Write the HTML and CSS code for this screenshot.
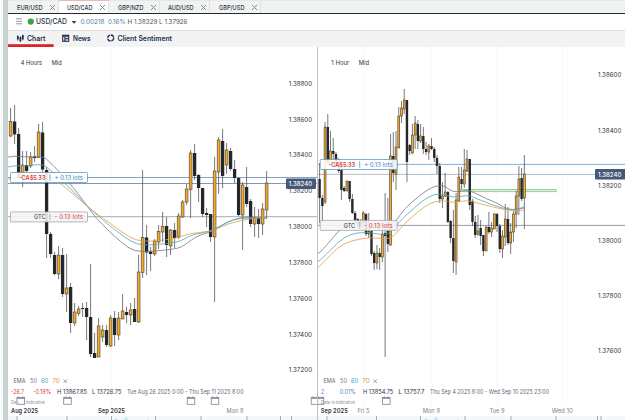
FILE: index.html
```html
<!DOCTYPE html>
<html lang="en">
<head>
<meta charset="utf-8">
<title>USD/CAD</title>
<link rel="stylesheet" href="styles.css">
</head>
<body>
<div class="app">
  <div class="rail"></div>
  <main class="workspace">
    <div class="tabs">
      <div class="tab"><svg viewBox="0 0 25.5 7"><text y="6" textLength="25.5" lengthAdjust="spacingAndGlyphs">EUR/USD</text></svg><i class="close"></i></div>
      <div class="tab active"><svg viewBox="0 0 25.5 7"><text y="6" textLength="25.5" lengthAdjust="spacingAndGlyphs">USD/CAD</text></svg><i class="close"></i></div>
      <div class="tab"><svg viewBox="0 0 25.5 7"><text y="6" textLength="25.5" lengthAdjust="spacingAndGlyphs">GBP/NZD</text></svg><i class="close"></i></div>
      <div class="tab"><svg viewBox="0 0 25.5 7"><text y="6" textLength="25.5" lengthAdjust="spacingAndGlyphs">AUD/USD</text></svg><i class="close"></i></div>
      <div class="tab"><svg viewBox="0 0 25.5 7"><text y="6" textLength="25.5" lengthAdjust="spacingAndGlyphs">GBP/USD</text></svg><i class="close"></i></div>
    </div>
    <div class="quote">
      <svg width="617" height="16" viewBox="8 14 617 16">
        <path d="M16 18.800h6M16 21.300h6M16 23.800h6" stroke="#777d86" stroke-width=".8"/>
        <circle cx="30.8" cy="21.6" r="3.1" fill="#35a447"/>
        <text class="pair" x="36" y="24.4" textLength="31" lengthAdjust="spacingAndGlyphs">USD/CAD</text>
        <path d="M71.5 21h5l-2.5 2.700z" fill="#333b48"/>
        <text class="up" x="80.5" y="24.3" textLength="24" lengthAdjust="spacingAndGlyphs">0.00218</text>
        <text class="up" x="108" y="24.3" textLength="17.5" lengthAdjust="spacingAndGlyphs">0.16%</text>
        <text class="range" x="127.5" y="24.3" textLength="60" lengthAdjust="spacingAndGlyphs">H 1.38329 L 1.37926</text>
      </svg>
    </div>
    <nav class="nav">
      <svg width="617" height="16" viewBox="8 31 617 16">
        <g stroke="#1b2e4d" fill="none">
          <path d="M17.8 36v3.5M20.4 37v4.500M22.8 35v4.500" stroke-width="1.7"/>
          <path d="M17.8 35v6M20.4 36v6M22.8 34.500v6" stroke-width=".5"/>
          <rect x="62.7" y="35.3" width="6" height="6" stroke-width="1.1"/>
          <path d="M62.500 36h6.500M65 37v4M66 38.600h2.500" stroke-width="1.3"/>
          <circle cx="110.7" cy="38" r="3" stroke-width="1.3" stroke-dasharray="3.9 .8"/>
        </g>
        <text x="27" y="40.6" textLength="18.5" lengthAdjust="spacingAndGlyphs">Chart</text>
        <text x="73" y="40.6" textLength="17.5" lengthAdjust="spacingAndGlyphs">News</text>
        <text x="117.5" y="40.6" textLength="54.5" lengthAdjust="spacingAndGlyphs">Client Sentiment</text>
        <rect x="8" y="44.2" width="45.7" height="2.8" fill="#dc2328"/>
      </svg>
    </nav>
    <div class="charts">
      <svg id="left" class="chart left" viewBox="8 47 309 373"></svg>
      <svg id="right" class="chart" viewBox="318 47 307 373"></svg>
    </div>
  </main>
</div>
<script src="chart.js"></script>
</body>
</html>
```
FILE: styles.css
```css
* { box-sizing: border-box; }
body { margin: 0; background: #fff; font-family: Inter, "Liberation Sans", sans-serif; overflow: hidden; }
.app { display: flex; width: 625px; height: 420px; }
.rail { flex: none; width: 8px; border-left: 3px solid #fbfcfc; background: #c9d3d4; }
.workspace { flex: 1; display: flex; flex-direction: column; min-width: 0; }
.workspace svg { display: block; }
.tabs { height: 14px; flex: none; display: flex; background: #f1f3f3; border-bottom: 1px solid #26282b; border-top: 1px solid #e3e8e8; }
.tab { width: 50.5px; display: flex; align-items: center; justify-content: space-between; padding: 0 3px 0 8.5px; border-right: 1px solid #e0e3e4; }
.tab.active { background: #fff; border-top: 1px solid #efb4b4; margin-top: -1px; }
.tab svg { width: 25.5px; height: 7px; overflow: visible; }
.tab text { font-size: 6.6px; font-weight: 500; fill: #303641; }
.close { width: 5px; height: 5px; background: linear-gradient(45deg, transparent 44%, #858a91 44%, #858a91 56%, transparent 56%), linear-gradient(-45deg, transparent 44%, #858a91 44%, #858a91 56%, transparent 56%); }
.quote { height: 16px; flex: none; }
.quote text { font-size: 6.6px; }
.quote .pair { font-size: 7.2px; font-weight: 500; fill: #253044; }
.quote .up { fill: #4580a8; }
.quote .range { fill: #4c5158; }
.nav { height: 17px; flex: none; background: #f3f3f3; border-top: 1px solid #dedede; }
.nav text { font-size: 7px; font-weight: 600; fill: #1b2e4d; }
.charts { flex: 1; display: flex; }
.chart { flex: none; width: 307px; height: 373px; }
.chart.left { width: 310px; border-right: 1px solid #c0c0c6; }
.chart text { font-size: 6.6px; fill: #303338; }
.chart .small { font-size: 6.2px; }
.chart .tiny { font-size: 4.8px; fill: #8c9096; }
.chart .month { font-weight: 600; fill: #34373c; }
.chart .day { fill: #7d8188; }
.chart .dates { fill: #626775; }
.chart .red { fill: #d63f3b; }
.chart .blue { fill: #3f89c0; }
.chart .gray { fill: #77798b; }
.chart .teal { fill: #43a8b6; }
.chart .amber { fill: #d39a34; }
.chart .bold { font-weight: 600; }
.chart .now { fill: #fff; font-weight: 500; }
```
FILE: chart.js
```javascript
// Candle rows: high, low, body top, body bottom, direction (1 = rising)
const fourHour = [
[108,137,121.5,136,1],[105,144,121.5,134.5,0],[128,180,134,178,0],[151,187,165,177,1],[151,172,165,171,0],[152,168,157,166,1],[146,162,156.5,158,0],[124,158,132,157.5,1],[122,172,132.5,169.5,0],[167,258,170,234,0],
[232,258,234,254,0],[252,275,255,274,0],[246,279,255,274,1],[248,297,255,294,0],[254,312,288,294,1],[283,333,287,323,0],[303,326,312,323,1],[306,316,309,313.5,1],[303,317,308,309,0],[302,340,308,317,0],
[264,357,317,354,0],[333,358,353,358,0],[318,357,326,357,1],[325,342,330,337,1],[325,347,330,345,0],[315,347,318,346,1],[311,346,318,335,0],[312,340,318,335,1],[294,319,311,319,1],[307,323,312,315,0],
[303,325,310,315,1],[298,322,309,322,0],[255,323,272,322,1],[170,278,237.5,272.5,1],[225,275,237.5,252.5,0],[247,271,251.5,254,0],[239,256,241,254,1],[225,249,231.5,242,1],[212,242,226.5,232,1],[217,257,226,245,0],
[229,255,230,246,1],[223,248,230,238,0],[213,239,216,237,1],[200,218,202,217,1],[184,205,189,202,1],[150,218,153,189.5,1],[144,180,153,176,0],[174,202,175,188,0],[188,217,188,214,0],[208,227,213,215,0],
[214,242,214,237,0],[157,302,171,237,1],[137,194,140,172,1],[129,188,141,176,0],[143,174,150,165,1],[148,171,151,169,0],[160,183,169,178,0],[177,216,178,215,0],[182,250,185,215,1],[167,207,187,204,0],
[199,227,201,224,0],[207,237,218,224,1],[209,238,218,224,0],[203,235,209,224,1],[171,219,183,210,1]];
const hourly = [
[163,223,179,198,0],[195,223,198,206,0],[122,204,127,202,1],[114,163,127,163,0],[131,163,151,163,1],[138,160,151,154,0],[152,168,154,165,0],[158,173,160,171,0],[168,200,170,190,0],[186,192,188,191,0],
[181,191,181,191,1],[181,202,181,199,0],[194,214,199,213,0],[211,223,213,220,0],[218,228,219,226,0],[219,228,221,226,0],[211,229,213,226,1],[213,236,214,234,0],[213,238,231,234,1],[229,256,231,254,0],
[251,270,253,263,0],[245,269,253,263,1],[248,270,253,257,0],[228,262,234,257,1],[193,357,233,236,0],[198,252,231,244,0],[134,246,156,245,1],[132,182,156,173,0],[131,190,147,174,1],[107,148,116,148,1],
[101,123,108,116,1],[89,114,100,109,1],[100,182,100,162,0],[144,155,145,151,0],[124,154,135,153,1],[116,149,123,135,1],[120,149,124,141,0],[124,143,136,141,1],[127,154,136,149,0],[142,155,149,152,0],
[144,160,146,152,1],[138,150,146,149,0],[147,162,149,158,0],[155,174,158,166,0],[163,203,166,199,0],[182,208,196,199,1],[173,197,192,196,1],[191,223,192,222,0],[220,243,221,238,0],[210,273,238,261,0],
[193,275,200,262,1],[167,202,177,201,1],[167,189,179,184,0],[149,188,170,184,1],[150,172,159,171,1],[159,210,159,205,0],[199,226,201,222,0],[216,238,222,235,0],[215,236,231,234,1],[220,245,228,236,0],
[235,256,235,251,0],[226,251,227,251,1],[212,234,227,232,0],[222,237,228,232,1],[213,229,214,229,1],[213,232,214,226,0],[224,253,226,249,0],[230,258,236,249,1],[204,246,219,237,1],[207,245,219,243,0],
[223,254,232,243,1],[211,242,214,232,1],[191,228,196,214,1],[166,215,179,196,1],[168,201,178,199,0],[155,229,174,198,1]];

const line = (x1, y1, x2, y2, c, w = 1) => `<path d="M${x1} ${y1}L${x2} ${y2}" stroke="${c}" stroke-width="${w}"/>`;
const rect = (x, y, w, h, fill, extra = '') => `<rect x="${x}" y="${y}" width="${w}" height="${h}" fill="${fill}" ${extra}/>`;
const text = (x, y, len, s, cls = '') => `<text x="${x}" y="${y}" textLength="${len}" lengthAdjust="spacingAndGlyphs" class="${cls}">${s}</text>`;
const calendar = x => `<g fill="#fff" fill-opacity=".8" stroke="#7e8494" stroke-width=".8"><rect x="${x - 3.8}" y="397.5" width="7.6" height="6.8"/><path d="M${x - 3.8} 398.5h7.6M${x - 2} 396.3v2M${x + 2} 396.3v2"/></g>`;

function candles(rows, x0, step, w) {
  return rows.map(([hi, lo, top, bottom, up], i) => {
    const x = x0 + i * step;
    return line(x, hi, x, lo, '#55575b', .8) + (up
      ? rect(x - w / 2 + .25, top, w - .5, Math.max(1, bottom - top), '#f1ab31', 'stroke="#4b3f2b" stroke-width=".6"')
      : rect(x - w / 2, top, w, Math.max(1, bottom - top), '#25272a'));
  }).join('');
}
// Smooth path through the moving-average points
function average(p, color) {
  let d = `M${p[0]}`;
  for (let i = 1; i < p.length - 1; i++) d += `Q${p[i]} ${(p[i][0] + p[i + 1][0]) / 2},${(p[i][1] + p[i + 1][1]) / 2}`;
  return `<path d="${d}L${p[p.length - 1]}" fill="none" stroke="${color}" stroke-width=".8"/>`;
}
function position(x, y, order) {
  const c = order ? '#a5a6a9' : '#5c9bc6';
  return rect(x, y - 5, 77, 10, order ? '#f5f5f5' : '#fff', `fill-opacity=".9" stroke="${c}" stroke-width=".8" rx=".8"`)
    + (order ? text(x + 23.5, y + 2.2, 11.5, 'GTC', 'small') : text(x + 8.5, y + 2.2, 26.5, '-CA$5.33', 'small red bold'))
    + line(x + 39.5, y - 3.2, x + 39.5, y + 3.2, c, .8)
    + text(x + 44, y + 2.2, 28.5, order ? '- 0.13 lots' : '+ 0.13 lots', order ? 'small red' : 'small blue');
}
function legend(x) {
  return text(x + 13.5, 383.3, 12, 'EMA', 'small dates') + text(x + 30, 383.3, 7, '50', 'small gray')
    + text(x + 41, 383.3, 7.3, '60', 'small teal') + text(x + 52.3, 383.3, 7.5, '70', 'small amber')
    + `<path d="M${x + 63.5} 379.5l3.5 3.5m0-3.5l-3.5 3.5" stroke="#777" stroke-width=".7"/>`;
}
function overview(x, w, ticks) {
  return rect(x, 416.2, w, 4, '#f3f7f9') + ticks.map(t => line(t, 416.3, t, 420, '#8e919c', .8)).join('');
}

const slate = '#77758d', teal = '#4ba9ba', amber = '#dca047';
const leftGrid = [83.5,119.5,155,190.5,227,262.5,298.5,334.5,370];
document.getElementById('left').innerHTML =
  leftGrid.map(y => line(8, y, 286, y, '#fcfcfc')).join('') + line(111.5, 47, 111.5, 406, '#f9f9f9')
  + line(8, 177.5, 317, 177.5, '#7b9bb3', .9) + line(8, 183.5, 317, 183.5, '#7a8ba4', .9) + line(8, 216.7, 317, 216.7, '#a3a3a7', .9)
  + candles(fourHour, 10.6, 4, 3.3)
  + average([[8,157],[14,156],[24,157],[42,156.5],[47,159],[70,183],[88,207],[95,217],[110,232],[122,243],[134,251.5],[150,251.5],[165,250],[178,248.5],[185,245],[195,237],[205,233.5],[213,231],[227,222],[240,217.5],[250,217],[266,218]], slate)
  + average([[8,167],[14,165.5],[25,166],[42,164],[48,168],[67,185],[88,207],[97,215],[110,226],[123,236],[136,244.5],[150,245],[173,243],[183,240],[193,234],[210,232],[227,222],[240,218],[266,218]], teal)
  + average([[8,179],[20,177],[42,173],[57,180],[88,207],[97,214],[110,223],[123,233],[136,240.5],[150,241.5],[175,239],[190,233],[210,232],[227,224],[247,219],[266,217]], amber)
  + position(10.5, 177.5, false) + position(10.5, 216.9, true)
  + leftGrid.map((y, i) => text(288.8, y + 2.2, 23.3, (1.388 - i * .002).toFixed(5))).join('')
  + rect(286, 178.6, 30, 10.4, '#46587a', 'rx="1"') + text(288.8, 186, 23.3, '1.38240', 'now')
  + text(20.8, 65, 21.2, '4 Hours', 'small') + text(51.7, 65, 10, 'Mid', 'small')
  + legend(0)
  + text(11, 394.2, 13, '-26.7', 'small red') + text(33, 394.2, 18.3, '-0.19%', 'small red')
  + text(57, 394.2, 30, 'H 13867.85', 'small') + text(92, 394.2, 29.5, 'L 13726.75', 'small')
  + text(127, 394.2, 116.5, 'Tue Aug 26 2025 0:00 - Thu Sep 11 2025 8:00', 'small dates')
  + text(11, 403.8, 34, 'Data is indicative', 'tiny') + [20.8,67.5,191,215,315].map(calendar).join('')
  + text(11, 413.2, 27, 'Aug 2025', 'month') + text(98, 413.2, 27, 'Sep 2025', 'month') + text(226.5, 413.2, 17, 'Mon 8', 'day')
  + overview(8, 309, [17,67,111.5,155.5,201,247,280.5,291.5])
  + '<path d="M124.500 420l1.500-3 1.500 3M114 420l2-1 2 1M147 420l2-1" fill="#c3e3ec" stroke="#a8d5e2" stroke-width=".4"/>';

const rightGrid = [75,130.5,185.5,240.5,296,351];
document.getElementById('right').innerHTML =
  rightGrid.map(y => line(318, y, 595, y, '#fcfcfc')).join('') + [363.5,431.5,497,562.5].map(x => line(x, 47, x, 406, '#f9f9f9')).join('')
  + line(318, 164.4, 625, 164.4, '#6faad3', .9) + line(318, 174.4, 625, 174.4, '#a9b3c6', .9) + line(318, 225.4, 625, 225.4, '#8f8d9e', .9)
  + rect(460, 189.5, 96, 2.2, '#dff1df', 'stroke="#83c488" stroke-width=".8"')
  + candles(hourly, 319.6, 2.73, 2.4)
  + average([[317.5,254],[322,251],[338,231],[350,223],[365,222],[378,225],[390,226],[397,220],[404,209],[420,195],[432,187],[440,185.5],[445,186],[453,192.5],[467,190],[473,192],[487,199],[497,203],[505,208],[512,210],[524,208]], slate)
  + average([[317.5,262],[322,259],[338,242],[350,234],[365,232],[378,234],[387,235],[393,229],[403,218],[412,210],[421,202],[430,196],[440,193],[453,198],[467,195],[473,197],[490,204],[505,209],[514,210],[524,207]], teal)
  + average([[317.5,268],[322,264],[338,247],[350,241],[370,237],[388,239.5],[395,235],[403,225],[420,210],[430,203],[442,200],[453,203],[467,200],[477,203],[497,208],[513,211],[524,210]], amber)
  + position(320.2, 164.5, false) + position(320.2, 225.4, true)
  + rightGrid.map((y, i) => text(598, y + 2.2, 23.3, (1.386 - i * .002).toFixed(5))).join('')
  + rect(595, 169, 31, 10.6, '#46587a', 'rx="1"') + text(598, 176.6, 23.3, '1.38240', 'now')
  + text(331.3, 65, 18, '1 Hour', 'small') + text(358.8, 65, 10.2, 'Mid', 'small')
  + legend(310)
  + text(321, 394.2, 3.2, '2', 'small blue') + text(339.7, 394.2, 16, '0.01%', 'small blue')
  + text(363, 394.2, 30.3, 'H 13854.75', 'small') + text(398.5, 394.2, 26, 'L 13757.7', 'small')
  + text(430, 394.2, 119, 'Thu Sep 4 2025 8:00 - Wed Sep 10 2025 23:00', 'small dates')
  + calendar(315) + calendar(320) + text(321, 403.8, 34, 'Data is indicative', 'tiny') + calendar(386.3)
  + text(320.8, 413.2, 27, 'Sep 2025', 'month') + text(357.5, 413.2, 12, 'Fri 5', 'day') + text(422.7, 413.2, 17.3, 'Mon 8', 'day')
  + text(489.5, 413.2, 15, 'Tue 9', 'day') + text(551.7, 413.2, 21.3, 'Wed 10', 'day')
  + overview(318, 307, [327,376.5,420.5,465,511,556,597.5,601])
  + '<path d="M434.500 420l1.500-3 1.500 3M424 420l2-1 2 1M457 420l2-1" fill="#c3e3ec" stroke="#a8d5e2" stroke-width=".4"/>';
```
